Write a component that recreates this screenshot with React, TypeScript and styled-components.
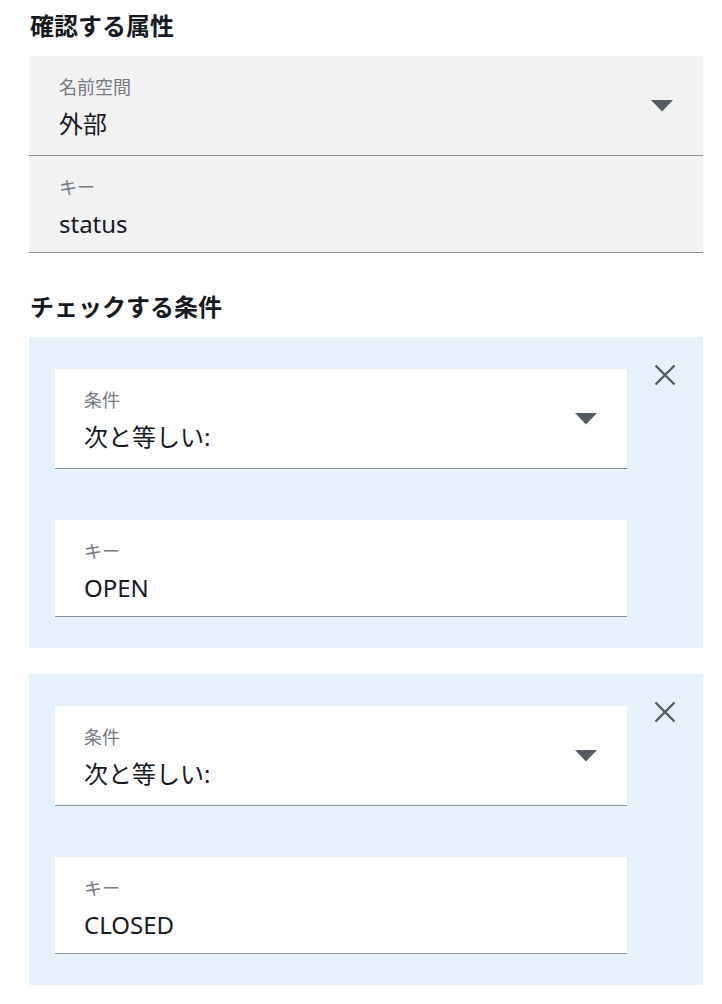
import React from "react";
import styled, { createGlobalStyle } from "styled-components";

const GlobalStyle = createGlobalStyle`
  html, body {
    margin: 0;
    padding: 0;
    background: #ffffff;
  }
  body {
    font-family: "Noto Sans", "Noto Sans CJK JP", sans-serif;
    color: #16191f;
  }
`;

const Page = styled.div`
  width: 674px;
  padding: 10px 0 20px 29px;
  display: flex;
  flex-direction: column;
`;

const Heading = styled.h2<{ $top?: number }>`
  margin: ${(p) => p.$top ?? 0}px 0 14px 1px;
  font-size: 24px;
  line-height: 32px;
  font-weight: 700;
  color: #16191f;
`;

const GrayGroup = styled.div`
  display: flex;
  flex-direction: column;
  background: #f2f2f2;
`;

const Field = styled.div<{ $bg: string; $select?: boolean; $inset: number }>`
  position: relative;
  display: flex;
  flex-direction: column;
  background: ${(p) => p.$bg};
  border-bottom: 1px solid #8c9196;
  padding: 19px 60px ${(p) => (p.$select ? 15 : 12)}px ${(p) => p.$inset}px;
`;

const Label = styled.span`
  font-size: 18px;
  line-height: 24px;
  color: #737a81;
`;

const Value = styled.span`
  margin-top: 9px;
  font-size: 24px;
  line-height: 32px;
  color: #16191f;
`;

const Caret = styled.svg`
  position: absolute;
  right: 30px;
  top: 50%;
  margin-top: -6px;
  width: 22px;
  height: 12px;
`;

const ConditionList = styled.div`
  display: flex;
  flex-direction: column;
  gap: 26px;
`;

const Card = styled.div`
  display: grid;
  grid-template-columns: 1fr 22px;
  column-gap: 27px;
  align-items: start;
  background: #e5f1fb;
  padding: 32px 27px 31px 26px;
`;

const Fields = styled.div`
  display: flex;
  flex-direction: column;
  gap: 51px;
`;

const CloseButton = styled.button`
  margin-top: -5px;
  width: 22px;
  height: 22px;
  padding: 0;
  border: 0;
  background: transparent;
  cursor: pointer;
  display: flex;
`;

const CaretIcon = () => (
  <Caret viewBox="0 0 22 12">
    <path d="M0 0 H22 L11 11.5 Z" fill="#545b64" />
  </Caret>
);

const CloseIcon = () => (
  <svg width="22" height="22" viewBox="0 0 22 22">
    <path d="M1.5 1.5 L20.5 20.5 M20.5 1.5 L1.5 20.5" stroke="#545b64" strokeWidth="2.4" />
  </svg>
);

type FieldProps = { label: string; value: string; select?: boolean; bg: string; inset: number };

const FormField = ({ label, value, select, bg, inset }: FieldProps) => (
  <Field $bg={bg} $select={select} $inset={inset}>
    <Label>{label}</Label>
    <Value>{value}</Value>
    {select && <CaretIcon />}
  </Field>
);

const conditions = ["OPEN", "CLOSED"];

export default function App() {
  return (
    <>
      <GlobalStyle />
      <Page>
        <Heading>確認する属性</Heading>
        <GrayGroup>
          <FormField label="名前空間" value="外部" select bg="#f2f2f2" inset={30} />
          <FormField label="キー" value="status" bg="#f2f2f2" inset={30} />
        </GrayGroup>
        <Heading $top={38}>チェックする条件</Heading>
        <ConditionList>
          {conditions.map((c) => (
            <Card key={c}>
              <Fields>
                <FormField label="条件" value="次と等しい:" select bg="#ffffff" inset={29} />
                <FormField label="キー" value={c} bg="#ffffff" inset={29} />
              </Fields>
              <CloseButton aria-label="削除">
                <CloseIcon />
              </CloseButton>
            </Card>
          ))}
        </ConditionList>
      </Page>
    </>
  );
}
